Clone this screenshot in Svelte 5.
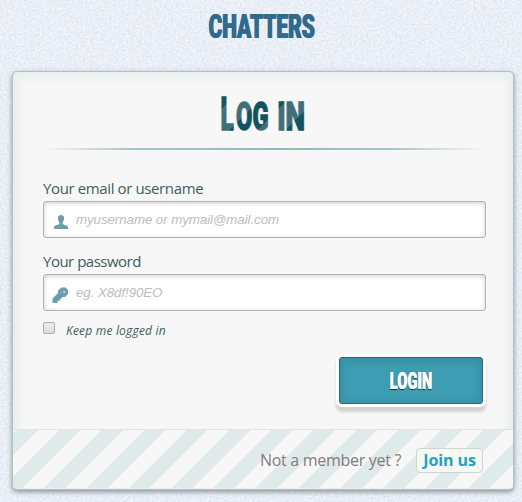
<script>
  let username = $state('');
  let password = $state('');
  let keep = $state(false);
</script>

<div class="page">
  <svg class="cloth" width="522" height="502" aria-hidden="true">
    <filter id="weave" x="0" y="0" width="100%" height="100%" color-interpolation-filters="sRGB">
      <feTurbulence type="fractalNoise" baseFrequency="0.42 0.5" numOctaves="2" seed="4" />
      <feColorMatrix values="0.16 0 0 0 0.835  0.13 0 0 0 0.87  0.06 0 0 0 0.937  0 0 0 0 1" />
    </filter>
    <rect width="522" height="502" filter="url(#weave)" />
  </svg>

  <header>
    <svg class="brand" width="114" height="48">
      <text transform="translate(2.5 34.5) scale(.6 1)" textLength="177" lengthAdjust="spacingAndGlyphs">CHATTERS</text>
    </svg>
  </header>

  <main class="panel">
    <form onsubmit={(e) => e.preventDefault()}>
      <h1>
        <svg width="104" height="60">
          <defs>
            <linearGradient id="stripe" gradientUnits="userSpaceOnUse" gradientTransform="scale(1.6667 1)" x1="-1.5" y1="10" x2="26.8" y2="38.3" spreadMethod="repeat">
              <stop offset="0" stop-color="#12535d" />
              <stop offset=".5" stop-color="#12535d" />
              <stop offset=".5" stop-color="#406f76" />
              <stop offset="1" stop-color="#406f76" />
            </linearGradient>
          </defs>
          <g transform="scale(.6 1)">
            <text class="big" x="12.5" y="49.5" textLength="22" lengthAdjust="spacingAndGlyphs">L</text>
            <text class="small" x="38.5" y="49.5" textLength="54" lengthAdjust="spacingAndGlyphs">OG</text>
            <text class="small" x="107" y="49.5" textLength="46.5" lengthAdjust="spacingAndGlyphs">IN</text>
          </g>
        </svg>
      </h1>
      <div class="rule"></div>

      <label class="caption first" for="user">Your email or username</label>
      <div class="field">
        <svg width="16" height="16" viewBox="0 0 16 16"><path d="M8 1C5.9 1 4.8 2.3 4.9 4.5C5 6.3 5.7 7.7 6.4 8.5V10C5.8 10.9 1 11.3 1 13.3V15H15V13.3C15 11.3 10.2 10.9 9.6 10V8.5C10.3 7.7 11 6.3 11.1 4.5C11.2 2.3 10.1 1 8 1Z" /></svg>
        <input id="user" type="text" placeholder="myusername or mymail@mail.com" bind:value={username} />
      </div>

      <label class="caption pass" for="pw">Your password</label>
      <div class="field">
        <svg width="16" height="16" viewBox="1 0 16 16"><path fill-rule="evenodd" d="M9.5 .5H13.5L16 3V7L13 10H10.5L9 11.5V12.5H7.5V14H5.5V16H.5V11.5L6 6V3.5ZM11.3 4.4V5.6H13.4V4.4Z" /></svg>
        <input id="pw" type="password" placeholder="eg. X8df!90EO" bind:value={password} />
      </div>

      <div class="keep">
        <input id="keep" type="checkbox" bind:checked={keep} />
        <label for="keep">Keep me logged in</label>
      </div>

      <div class="actions">
        <button type="submit" aria-label="Login">
          <svg width="50" height="34"><text transform="translate(3.5 24.5) scale(.6 1)" textLength="71" lengthAdjust="spacingAndGlyphs">LOGIN</text></svg>
        </button>
      </div>
    </form>

    <footer>
      <span>Not a member yet ?</span>
      <a href="#register">Join us</a>
    </footer>
  </main>
</div>

<style>
  :global(body) { margin: 0; }
  .page {
    position: relative;
    width: 522px;
    height: 502px;
    overflow: hidden;
    background: #e9eef7;
    font-family: 'Open Sans', 'Noto Sans', sans-serif;
  }
  .cloth { position: absolute; inset: 0; }
  svg { display: block; overflow: visible; }
  header, .panel { position: relative; }
  header { height: 71px; padding: 3px 0 0 206px; box-sizing: border-box; }
  .brand text, h1 text, button text { font-family: Roboto, 'Liberation Sans', sans-serif; font-weight: 900; }
  .brand text { font-size: 34px; fill: #326a8c; text-shadow: .8px 0 0 #326a8c, -.4px 0 0 #326a8c; }
  .panel {
    width: 502px;
    height: 419px;
    margin-left: 12px;
    box-sizing: border-box;
    display: flex;
    flex-direction: column;
    background: #f7f7f7;
    border: 1px solid rgba(147, 184, 189, .8);
    border-radius: 5px;
    box-shadow: 0 2px 5px rgba(105, 108, 109, .7), 0 0 8px 5px rgba(208, 223, 226, .4) inset;
  }
  form { height: 357px; padding: 0 27px 0 30px; box-sizing: border-box; display: flex; flex-direction: column; }
  h1 { margin: 9px 0 0 170px; height: 60px; }
  h1 text { fill: url(#stripe); stroke: url(#stripe); stroke-width: 1.3; }
  .big { font-size: 46px; }
  .small { font-size: 39px; }
  .rule {
    height: 2px;
    margin-top: 7px;
    background: linear-gradient(to right, rgba(147, 184, 189, 0), rgba(147, 184, 189, .8) 20%, rgb(147, 184, 189) 53%, rgba(147, 184, 189, .8) 79%, rgba(147, 184, 189, 0));
  }
  .caption { height: 20px; line-height: 20px; font-size: 15px; color: #405c60; white-space: nowrap; letter-spacing: -.38px; }
  .first { margin-top: 28px; margin-bottom: 3px; }
  .pass { margin-top: 13px; margin-bottom: 3px; letter-spacing: -.5px; }
  .field {
    height: 37px;
    box-sizing: border-box;
    display: flex;
    align-items: center;
    padding-left: 9px;
    border: 1px solid #b2b2b2;
    border-radius: 3px;
    background: #fff;
    box-shadow: 0 1px 4px rgba(168, 168, 168, .6) inset;
  }
  .field svg { fill: #6a9fab; margin-top: 5px; }
  .field input {
    flex: 1;
    min-width: 0;
    margin: 0 0 0 7px;
    padding: 0;
    border: 0;
    outline: 0;
    background: none;
    font: italic 13.33px 'Liberation Sans', sans-serif;
    letter-spacing: -.08px;
  }
  .field input::placeholder { color: #bebcbc; opacity: 1; }
  .keep { height: 20px; margin-top: 9px; display: flex; align-items: center; }
  .keep input {
    appearance: none;
    width: 12px;
    height: 12px;
    box-sizing: border-box;
    margin: -4px 11px 0 0;
    border: 1px solid #adadad;
    border-radius: 2px;
    background: linear-gradient(#ededed, #dcdcdc);
  }
  .keep label { font-size: 12px; font-style: italic; color: #405c60; letter-spacing: .2px; }
  .actions { display: flex; justify-content: flex-end; padding: 17px 3px 0 0; }
  button {
    width: 144px;
    height: 47px;
    padding: 0;
    display: flex;
    align-items: center;
    justify-content: center;
    background: #3d9db3;
    border: 1px solid #1c6c7a;
    border-radius: 3px;
    box-shadow: 0 1px 6px 4px rgba(0, 0, 0, .07) inset, 0 0 0 3px #fefefe, 0 5px 3px 3px #d2d2d2;
  }
  button text { font-size: 24px; fill: #fff; text-shadow: .5px 0 0 #fff, 0 1px 1px rgba(0, 0, 0, .7); }
  footer {
    height: 59px;
    box-sizing: border-box;
    display: flex;
    align-items: center;
    justify-content: flex-end;
    padding: 2px 30px 0 0;
    gap: 15px;
    border-top: 1px solid #dbe5e8;
    background: repeating-linear-gradient(135deg, #f7f7f7 0, #f7f7f7 2.8px, #e1eaeb 2.8px, #e1eaeb 17.8px, #f7f7f7 17.8px, #f7f7f7 30px);
    font-size: 16px;
    color: #7f7c7c;
  }
  footer span { letter-spacing: -.3px; }
  footer a {
    width: 65px;
    height: 23px;
    line-height: 23px;
    text-align: center;
    font-weight: 700;
    color: #1da2c1;
    text-decoration: none;
    background: #f7f8f1;
    border: 1px solid #cbd5d6;
    border-radius: 4px;
    letter-spacing: -.1px;
  }
</style>
